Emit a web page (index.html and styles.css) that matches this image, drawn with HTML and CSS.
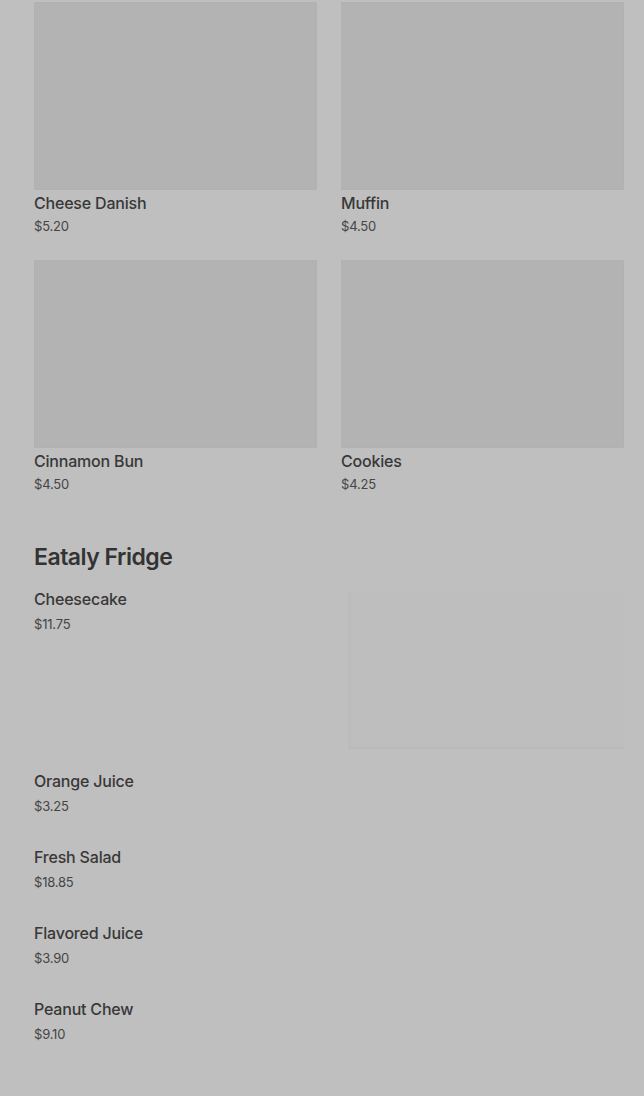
FILE: index.html
```html
<!DOCTYPE html>
<html>
<head>
<meta charset="utf-8">
<link rel="stylesheet" href="styles.css">
</head>
<body>
<main class="page">
  <section class="grid">
    <article class="card">
      <div class="thumb"></div>
      <div class="name">Cheese Danish</div>
      <div class="price">$5.20</div>
    </article>
    <article class="card">
      <div class="thumb"></div>
      <div class="name">Muffin</div>
      <div class="price">$4.50</div>
    </article>
    <article class="card">
      <div class="thumb"></div>
      <div class="name">Cinnamon Bun</div>
      <div class="price">$4.50</div>
    </article>
    <article class="card">
      <div class="thumb"></div>
      <div class="name">Cookies</div>
      <div class="price">$4.25</div>
    </article>
  </section>

  <section class="fridge">
    <h2 class="section-title">Eataly Fridge</h2>
    <div class="list">
      <article class="row row-image">
        <div class="row-text">
          <div class="name">Cheesecake</div>
          <div class="price">$11.75</div>
        </div>
        <div class="row-thumb"></div>
      </article>
      <article class="row">
        <div class="row-text">
          <div class="name">Orange Juice</div>
          <div class="price">$3.25</div>
        </div>
      </article>
      <article class="row">
        <div class="row-text">
          <div class="name">Fresh Salad</div>
          <div class="price">$18.85</div>
        </div>
      </article>
      <article class="row">
        <div class="row-text">
          <div class="name">Flavored Juice</div>
          <div class="price">$3.90</div>
        </div>
      </article>
      <article class="row">
        <div class="row-text">
          <div class="name">Peanut Chew</div>
          <div class="price">$9.10</div>
        </div>
      </article>
    </div>
  </section>
</main>
</body>
</html>
```

FILE: styles.css
```css
html, body {
  margin: 0;
  padding: 0;
  background: #bfbfbf;
}

body {
  font-family: Inter, Roboto, "Liberation Sans", sans-serif;
  color: #363636;
}

.page {
  padding: 2px 20px 40px 34px;
}

.grid {
  display: grid;
  grid-template-columns: 1fr 1fr;
  column-gap: 24px;
  row-gap: 24px;
}

.card {
  display: flex;
  flex-direction: column;
}

.thumb {
  height: 188px;
  background: #b3b3b3;
  box-shadow: inset 0 0 0 1px #b1b1b1;
}

.name {
  font-size: 16px;
  line-height: 22px;
  font-weight: 500;
  color: #383838;
  letter-spacing: -0.2px;
}

.card .name {
  margin-top: 2px;
}

.price {
  font-size: 13px;
  line-height: 20px;
  color: #454545;
  margin-top: 2px;
  letter-spacing: -0.2px;
}

.fridge {
  margin-top: 49px;
}

.section-title {
  margin: 0;
  font-size: 23px;
  line-height: 28px;
  font-weight: 600;
  letter-spacing: -0.5px;
  color: #333333;
}

.list {
  margin-top: 17px;
  display: flex;
  flex-direction: column;
  gap: 30px;
}

.row {
  display: flex;
  justify-content: space-between;
  align-items: flex-start;
}

.row .price {
  margin-top: 4px;
}

.row-thumb {
  width: 273px;
  height: 155px;
  margin: 4px 0 -7px;
  background: #bebebe;
  border-left: 3px solid #bbbbbb;
  box-shadow: 0 2px 0 #bbbbbb;
}
```
